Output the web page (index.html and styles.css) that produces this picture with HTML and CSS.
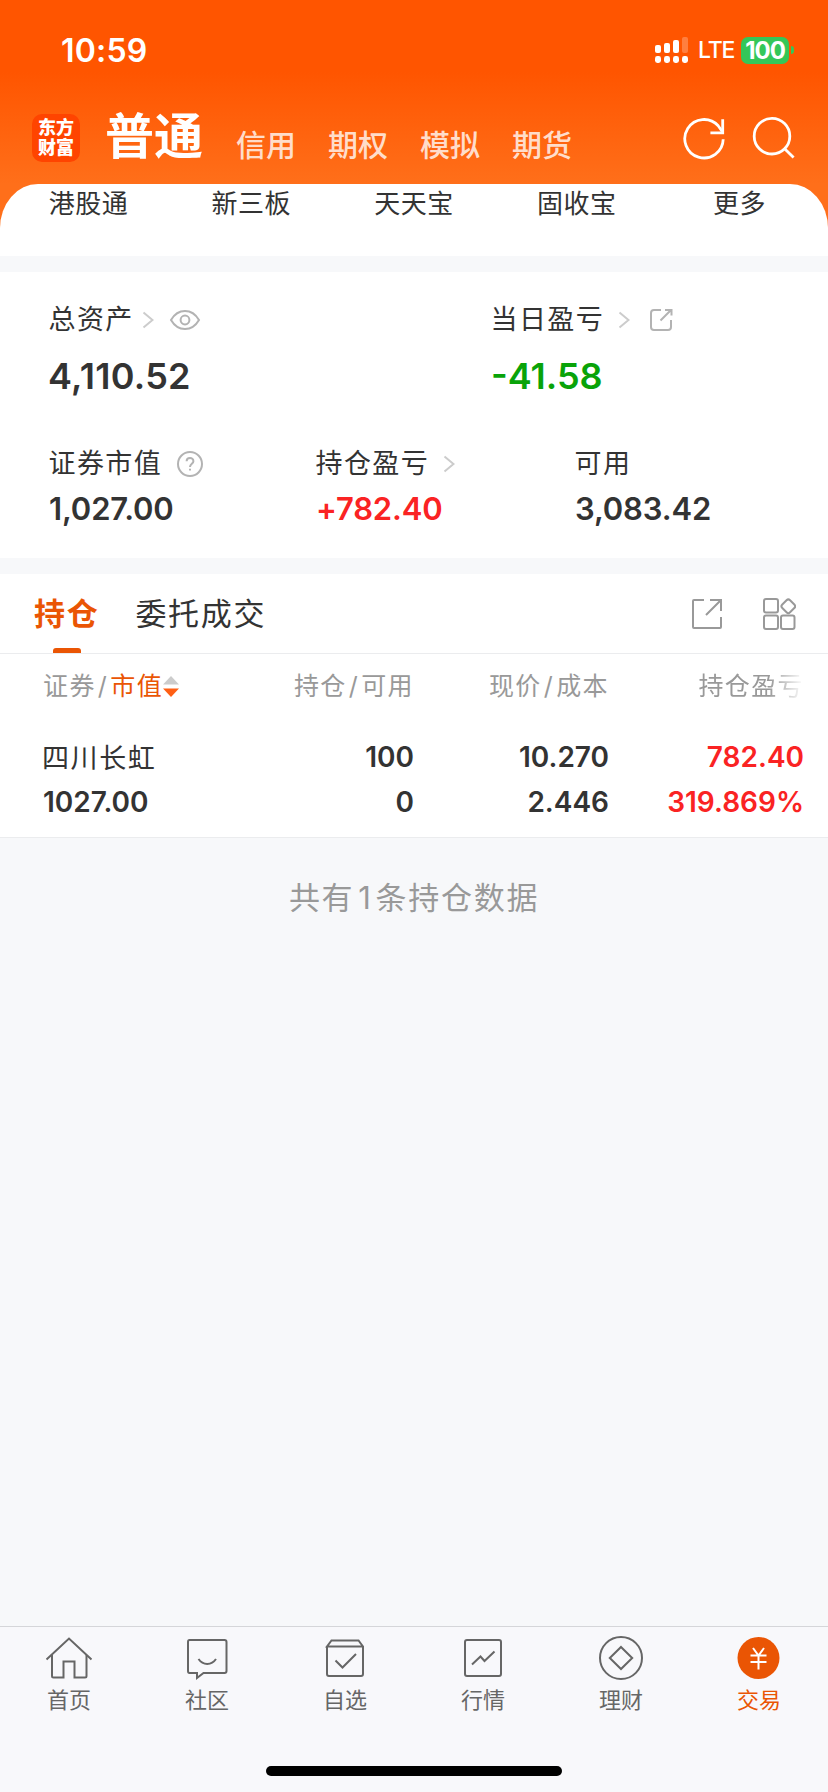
FILE: index.html
```
<!DOCTYPE html>
<html lang="zh-CN">
<head>
    <meta charset="UTF-8">
    <meta name="viewport" content="width=device-width, initial-scale=1.0">
    <title>交易 - 东方财富</title>
    <link rel="stylesheet" href="styles.css">
</head>
<body>
    <div class="top">
        <div class="status-bar">
            <span class="time">10:59</span>
            <div class="status-right">
                <svg class="signal" width="33" height="26" viewBox="0 0 33 26" fill="#fff">
                    <rect x="0" y="8" width="6" height="8" rx="2"/>
                    <rect x="9" y="6" width="6" height="10" rx="2"/>
                    <rect x="18" y="3" width="6" height="13" rx="2"/>
                    <rect x="27" y="0" width="6" height="16" rx="2" opacity=".25"/>
                    <rect x="0" y="19" width="6" height="7" rx="2.4"/>
                    <rect x="9" y="19" width="6" height="7" rx="2.4"/>
                    <rect x="18" y="19" width="6" height="7" rx="2.4"/>
                    <rect x="27" y="19" width="6" height="7" rx="2.4"/>
                </svg>
                <span class="lte">LTE</span>
                <span class="battery">100</span>
                <span class="battery-cap"></span>
            </div>
        </div>

        <div class="header">
            <div class="logo"><span>东方</span><span>财富</span></div>
            <div class="account-tabs">
                <span class="account active">普通</span>
                <span class="account">信用</span>
                <span class="account">期权</span>
                <span class="account">模拟</span>
                <span class="account">期货</span>
            </div>
            <div class="header-icons">
                <svg width="44" height="44" viewBox="0 0 44 44" fill="none" stroke="#fff" stroke-width="2.8">
                    <path d="M41.2 23.2A19.2 19.2 0 1 1 36.2 9.8L40.2 15.5"/>
                    <path d="M40.7 3.2V16.9H28.4"/>
                </svg>
                <svg width="44" height="44" viewBox="0 0 44 44" fill="none" stroke="#fff" stroke-width="2.8">
                    <circle cx="21" cy="20.2" r="17.8"/>
                    <path d="M33.6 32.8L42.6 41.4"/>
                </svg>
            </div>
        </div>

        <div class="shortcuts">
            <span>港股通</span>
            <span>新三板</span>
            <span>天天宝</span>
            <span>固收宝</span>
            <span>更多</span>
        </div>
    </div>

    <div class="assets">
        <div class="assets-row assets-main">
            <div class="asset">
                <div class="asset-label">
                    <span>总资产</span>
                    <svg class="arrow" width="12" height="18" viewBox="0 0 12 18"><path d="M1.5 1.5L10.5 9L1.5 16.5"/></svg>
                    <svg class="eye" width="32" height="22" viewBox="0 0 32 22">
                        <path d="M2 11C5.5 5 10.5 2 16 2S26.5 5 30 11C26.5 17 21.5 20 16 20S5.5 17 2 11Z"/>
                        <circle cx="16" cy="11" r="4.4"/>
                    </svg>
                </div>
                <div class="asset-value">4,110.52</div>
            </div>
            <div class="asset">
                <div class="asset-label">
                    <span>当日盈亏</span>
                    <svg class="arrow arrow-far" width="12" height="18" viewBox="0 0 12 18"><path d="M1.5 1.5L10.5 9L1.5 16.5"/></svg>
                    <svg class="share" width="24" height="24" viewBox="0 0 24 24">
                        <path d="M12 2H5Q2 2 2 5V19Q2 22 5 22H19Q22 22 22 19V12"/>
                        <path d="M16 2H22.5V7.5M22 2L11.5 12.5"/>
                    </svg>
                </div>
                <div class="asset-value down">-41.58</div>
            </div>
        </div>
        <div class="assets-row assets-sub">
            <div class="asset">
                <div class="asset-label">
                    <span>证券市值</span>
                    <svg class="help" width="26" height="26" viewBox="0 0 26 26">
                        <circle cx="13" cy="13" r="12"/>
                        <path d="M9.6 10.3C9.6 6 16.4 6 16.4 10.2C16.4 12.8 13 12.8 13 16"/>
                        <path d="M13 17.8V19.6"/>
                    </svg>
                </div>
                <div class="asset-value">1,027.00</div>
            </div>
            <div class="asset">
                <div class="asset-label">
                    <span>持仓盈亏</span>
                    <svg class="arrow arrow-far" width="12" height="18" viewBox="0 0 12 18"><path d="M1.5 1.5L10.5 9L1.5 16.5"/></svg>
                </div>
                <div class="asset-value up">+782.40</div>
            </div>
            <div class="asset">
                <div class="asset-label"><span>可用</span></div>
                <div class="asset-value">3,083.42</div>
            </div>
        </div>
    </div>

    <div class="positions">
        <div class="tabs">
            <span class="tab active">持仓</span>
            <span class="tab">委托成交</span>
            <div class="tab-icons">
                <svg width="32" height="32" viewBox="0 0 32 32">
                    <path d="M13 2H3Q2 2 2 3V29Q2 30 3 30H29Q30 30 30 29V19"/>
                    <path d="M19 2H30V13M30 2L15 17"/>
                </svg>
                <svg width="34" height="34" viewBox="0 0 34 34">
                    <rect x="2" y="2" width="14" height="13.5" rx="2"/>
                    <rect x="2" y="18.5" width="14" height="13.5" rx="2"/>
                    <rect x="19" y="18.5" width="13.5" height="13.5" rx="2"/>
                    <rect x="20.8" y="3.8" width="11" height="11" rx="2.5" transform="rotate(45 26.3 9.3)"/>
                </svg>
            </div>
        </div>

        <div class="table-row table-head">
            <span class="sort">证券<i>/</i><b>市值</b>
                <svg width="16" height="21" viewBox="0 0 16 21">
                    <path d="M8 0L16 8.5H0Z" fill="#ccc"/>
                    <path d="M8 21L0 12.5H16Z" fill="#ff5f14"/>
                </svg>
            </span>
            <span>持仓<i>/</i>可用</span>
            <span>现价<i>/</i>成本</span>
            <span class="fade">持仓盈亏</span>
        </div>

        <div class="table-row stock-row">
            <div><p class="stock-name">四川长虹</p><p>1027.00</p></div>
            <div><p>100</p><p>0</p></div>
            <div><p>10.270</p><p>2.446</p></div>
            <div class="up"><p>782.40</p><p>319.869%</p></div>
        </div>
    </div>

    <p class="summary">共有<span>1</span>条持仓数据</p>

    <div class="bottom">
        <div class="tabbar">
            <div class="tabbar-item">
                <svg width="48" height="48" viewBox="0 0 48 48">
                    <path d="M1.5 25.5L24 4.5L46.5 25.5"/>
                    <path d="M7 21V42Q7 43.5 8.5 43.5H18.5V27.5H29.5V43.5H40Q41.5 43.5 41.5 42V21"/>
                </svg>
                <span>首页</span>
            </div>
            <div class="tabbar-item">
                <svg width="48" height="48" viewBox="0 0 48 48">
                    <path d="M6.5 6H41.5Q43.5 6 43.5 8V37Q43.5 39 41.5 39H20.5L14 44V39H6.5Q5 39 5 37V8Q5 6 6.5 6Z"/>
                    <path d="M15.5 25C20 31.5 28.5 31.5 33 25"/>
                </svg>
                <span>社区</span>
            </div>
            <div class="tabbar-item">
                <svg width="48" height="48" viewBox="0 0 48 48">
                    <path d="M6 12.5V40Q6 42 8 42H40Q42 42 42 40V12.5L37.5 6.5H10.5L6 12.5H42"/>
                    <path d="M14.5 26.5L21.5 33.5L35 20"/>
                </svg>
                <span>自选</span>
            </div>
            <div class="tabbar-item">
                <svg width="48" height="48" viewBox="0 0 48 48">
                    <rect x="6" y="6" width="36" height="36" rx="2"/>
                    <path d="M13 30.5L21.5 22.5L25.5 27L35.5 17.5"/>
                </svg>
                <span>行情</span>
            </div>
            <div class="tabbar-item">
                <svg width="48" height="48" viewBox="0 0 48 48">
                    <circle cx="24" cy="24" r="21"/>
                    <path d="M24 13L35.2 24L24 35L12.8 24Z"/>
                </svg>
                <span>理财</span>
            </div>
            <div class="tabbar-item active">
                <svg width="48" height="48" viewBox="0 0 48 48">
                    <circle class="coin" cx="23.5" cy="24" r="21"/>
                    <path class="yen" d="M18 14L23.5 21.5L29 14M23.5 21.5V35.5M15.5 21.5H31.5M15.5 28H31.5"/>
                </svg>
                <span>交易</span>
            </div>
        </div>
        <div class="home-indicator"></div>
    </div>
</body>
</html>
```
FILE: styles.css
```
* {
    box-sizing: border-box;
}
body {
    margin: 0;
    width: 828px;
    height: 1792px;
    display: flex;
    flex-direction: column;
    background: #f7f8fa;
    color: #333;
    font-family: "Inter", "Noto Sans CJK SC", sans-serif;
    overflow: hidden;
}
p {
    margin: 0;
}
svg {
    display: block;
    flex-shrink: 0;
}

/* 顶部 */
.top {
    background: linear-gradient(#ff5500 0, #ff5500 72px, #ff6f1a 184px);
}
.status-bar {
    height: 100px;
    padding: 0 34px 0 61px;
    display: flex;
    justify-content: space-between;
    align-items: center;
    color: #fff;
}
.time {
    font-size: 32px;
    font-weight: 600;
    letter-spacing: 0.2px;
}
.status-right {
    display: flex;
    align-items: center;
}
.lte {
    margin-left: 10px;
    width: 43px;
    font-size: 23px;
    font-weight: 500;
    letter-spacing: -1.2px;
}
.battery {
    width: 48px;
    height: 27px;
    line-height: 27px;
    border-radius: 7px;
    background: #34c759;
    font-size: 24px;
    font-weight: 700;
    letter-spacing: -1px;
    text-align: center;
}
.battery-cap {
    width: 3px;
    height: 8px;
    margin-left: 2px;
    border-radius: 0 4px 4px 0;
    background: #34c759;
}
.header {
    height: 84px;
    padding: 0 33px 0 32px;
    display: flex;
    align-items: flex-start;
}
.logo {
    width: 48px;
    height: 48px;
    margin-top: 14px;
    padding-top: 4px;
    border-radius: 10px;
    background: #ff4400;
    color: #fff;
    display: flex;
    flex-direction: column;
    align-items: center;
    font-size: 18px;
    font-weight: 900;
    line-height: 20px;
}
.account-tabs {
    display: flex;
    gap: 32px;
    margin-left: 25px;
}
.account {
    font-size: 30px;
    font-weight: 500;
    line-height: 90px;
    color: rgba(255,255,255,0.8);
}
.account.active {
    font-size: 49px;
    font-weight: 700;
    line-height: 74px;
    margin-right: 1px;
    color: #fff;
}
.header-icons {
    margin-left: auto;
    margin-top: 16px;
    display: flex;
    gap: 25px;
}
.shortcuts {
    height: 72px;
    padding: 0 7px;
    border-radius: 38px 38px 0 0 / 44px 44px 0 0;
    background: #fff;
    display: flex;
    line-height: 39px;
}
.shortcuts span {
    flex: 1;
    text-align: center;
    font-size: 26px;
    letter-spacing: 0.5px;
}

/* 资产 */
.assets {
    height: 286px;
    margin-top: 16px;
    padding-top: 28px;
    background: #fff;
}
.assets-row {
    display: grid;
    padding-left: 49px;
}
.assets-main {
    grid-template-columns: 442px 1fr;
    height: 144px;
}
.assets-sub {
    grid-template-columns: 267px 259px 1fr;
}
.asset-label {
    display: flex;
    align-items: center;
    height: 40px;
    font-size: 27px;
    letter-spacing: 1.4px;
}
.asset-label span {
    margin-left: -0.5px;
    line-height: 40px;
}
.asset-label svg {
    fill: none;
    stroke: #b3b3b3;
    stroke-width: 2;
}
.asset-label .arrow {
    margin-left: 8px;
    stroke: #ccc;
}
.asset-label .arrow-far {
    margin-left: 14px;
}
.eye {
    margin-left: 15px;
}
.share {
    margin-left: 19px;
}
.help {
    margin-left: 15px;
}
.asset-value {
    font-size: 36px;
    font-weight: 600;
    line-height: 72px;
}
.assets-main .asset-value {
    margin-left: -1px;
    letter-spacing: 0.3px;
}
.assets-sub .asset-value {
    font-size: 31px;
    line-height: 50px;
    letter-spacing: -0.15px;
}
.up {
    color: #fa2323;
}
.assets .down {
    margin-left: 0;
    letter-spacing: 0;
    color: #09a309;
}

/* 持仓 */
.positions {
    height: 264px;
    margin-top: 16px;
    background: #fff;
    border-bottom: 1px solid #ebecee;
}
.tabs {
    height: 80px;
    padding: 0 32px 0 34px;
    display: flex;
    align-items: center;
    border-bottom: 1px solid #ebecee;
    font-size: 31px;
    letter-spacing: 1.7px;
}
.tab {
    position: relative;
    line-height: 79px;
    margin-right: 36px;
}
.tab.active {
    color: #ea5504;
    font-weight: 700;
}
.tab.active::after {
    content: "";
    position: absolute;
    left: 19px;
    bottom: 0;
    width: 28px;
    height: 5px;
    border-radius: 3px 3px 0 0;
    background: #ea5504;
}
.tab-icons {
    margin-left: auto;
    display: flex;
    align-items: center;
    gap: 39px;
}
.tab-icons svg {
    fill: none;
    stroke: #999;
    stroke-width: 2;
}
.table-row {
    display: grid;
    grid-template-columns: 176px 195px 195px 195px;
    padding-left: 43px;
    text-align: right;
}
.table-row > :first-child {
    text-align: left;
}
.table-head {
    height: 64px;
    line-height: 65px;
    font-size: 25px;
    letter-spacing: 1.4px;
    color: #999;
}
.table-head i {
    font-style: normal;
    margin: 0 2px;
}
.sort {
    display: flex;
    align-items: center;
    white-space: nowrap;
}
.sort b {
    font-weight: 400;
    color: #ea5504;
}
.fade {
    -webkit-mask-image: linear-gradient(to right, #000 82%, transparent);
    mask-image: linear-gradient(to right, #000 82%, transparent);
}
.stock-row {
    padding-top: 17px;
    font-size: 28px;
    font-weight: 600;
    line-height: 45px;
}
.stock-name {
    margin-left: -1px;
    font-weight: 400;
    font-size: 27px;
    line-height: 47px;
    margin-bottom: -2px;
    letter-spacing: 1.6px;
}
.summary {
    margin-top: 36px;
    text-align: center;
    font-size: 31px;
    line-height: 48px;
    letter-spacing: 1.7px;
    color: #999;
}
.summary span {
    margin: 0 3px 0 4px;
}

/* 底部导航 */
.bottom {
    margin-top: auto;
    height: 166px;
    border-top: 1px solid #d5d6d9;
    background: #f8f8fb;
}
.tabbar {
    display: flex;
    height: 139px;
    padding-top: 7px;
}
.tabbar-item {
    flex: 1;
    display: flex;
    flex-direction: column;
    align-items: center;
    color: #666;
    font-size: 22px;
    line-height: 36px;
}
.tabbar-item svg {
    fill: none;
    stroke: #666;
    stroke-width: 2;
}
.tabbar-item.active {
    color: #ea5504;
}
.tabbar-item .coin {
    fill: #ea5504;
    stroke: none;
}
.tabbar-item .yen {
    stroke: #fff;
}
.home-indicator {
    width: 296px;
    height: 10px;
    margin: 0 auto;
    border-radius: 5px;
    background: #000;
}
```
